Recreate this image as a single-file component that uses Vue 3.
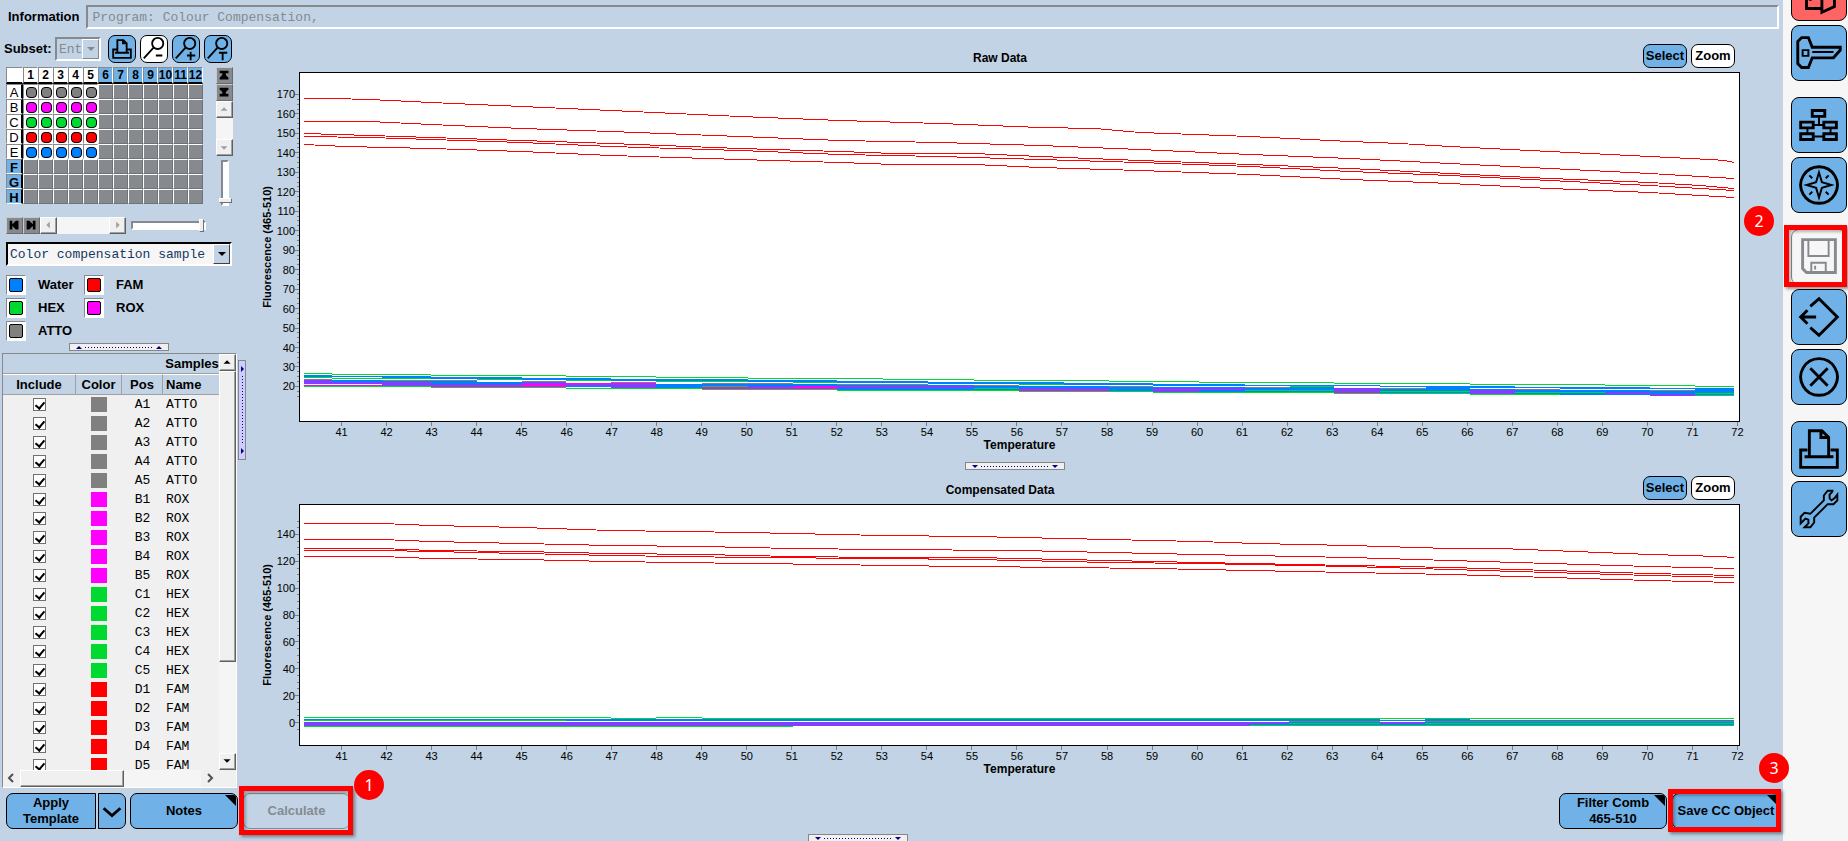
<script setup>
import { ref } from 'vue'

const COLORS = { ATTO: '#808080', ROX: '#ff00ff', HEX: '#00d930', FAM: '#ff0000', Water: '#0080ff' }

const plateRows = [
  ['A', 'ATTO'], ['B', 'ROX'], ['C', 'HEX'], ['D', 'FAM'], ['E', 'Water'], ['F', ''], ['G', ''], ['H', ''],
]
const legend = ['Water', 'FAM', 'HEX', 'ROX', 'ATTO']

const samples = ref(
  plateRows.slice(0, 4).flatMap(([row, dye]) =>
    [1, 2, 3, 4, 5].map((n) => ({ pos: row + n, dye, include: true })),
  ),
)

const G = COLORS.HEX
const B = COLORS.Water
const M = COLORS.ROX
const K = COLORS.ATTO

// Each band run: colour, thickness, then [start, end, y] pieces
const rawBands = [
  [G, 1, [[304, 332, 373], [332, 431, 374], [431, 566, 375], [566, 656, 376], [656, 748, 377], [748, 883, 378], [883, 974, 379], [974, 1109, 380], [1109, 1199, 381], [1199, 1334, 382], [1334, 1470, 383], [1470, 1605, 384], [1605, 1695, 385], [1695, 1734, 386]]],
  [G, 1, [[304, 332, 377], [332, 431, 378], [477, 566, 379], [566, 656, 380], [656, 748, 381], [793, 883, 382], [928, 1019, 383], [1019, 1109, 384], [1153, 1245, 385], [1290, 1334, 386]]],
  [B, 2, [[304, 332, 375], [382, 431, 376], [431, 522, 377], [522, 611, 378], [611, 748, 379], [748, 837, 380], [837, 928, 381], [928, 1064, 382], [1064, 1153, 383], [1153, 1245, 384], [1426, 1515, 386], [1560, 1650, 387], [1695, 1734, 388]]],
  [B, 1, [[332, 382, 376], [1245, 1334, 385], [1334, 1380, 385], [1380, 1426, 386], [1515, 1560, 387], [1650, 1695, 388]]],
  [G, 1, [[304, 431, 386], [431, 566, 387], [566, 702, 388], [702, 837, 389], [837, 1019, 390], [1019, 1153, 391], [1153, 1334, 392], [1334, 1470, 393], [1470, 1650, 394], [1695, 1734, 395]]],
  [B, 4, [[304, 382, 380], [382, 477, 381], [477, 566, 382], [566, 656, 383], [656, 748, 384]]],
  [B, 5, [[748, 837, 384], [837, 928, 385], [928, 1019, 385], [1019, 1153, 386], [1153, 1334, 387]]],
  [B, 5, [[1334, 1470, 388], [1470, 1560, 389], [1560, 1734, 390]]],
  [K, 1, [[304, 332, 379], [382, 477, 380], [522, 566, 381], [611, 656, 382], [702, 793, 383], [837, 928, 384], [974, 1019, 385], [1109, 1153, 386], [1245, 1290, 387], [1380, 1426, 388], [1515, 1560, 389], [1650, 1695, 390]]],
  [M, 1, [[332, 431, 382], [304, 431, 385], [611, 656, 387], [793, 883, 386], [883, 974, 387], [1153, 1245, 389], [1153, 1199, 391], [1334, 1380, 392], [1470, 1515, 390], [1470, 1515, 392], [1605, 1650, 392], [1650, 1695, 395]]],
  [M, 2, [[304, 332, 381], [431, 566, 385], [522, 656, 383], [702, 837, 387], [1019, 1109, 389], [1334, 1380, 389]]],
  [G, 1, [[702, 748, 386], [974, 1019, 388], [1245, 1334, 390], [1380, 1470, 391], [1515, 1605, 392], [1695, 1734, 393]]],
]

const compBands = [
  [G, 1, [[304, 611, 717], [611, 656, 718], [656, 702, 717], [702, 1734, 718], [304, 566, 720]]],
  [B, 1, [[304, 566, 719], [1380, 1425, 720]]],
  [B, 2, [[566, 1289, 719]]],
  [B, 3, [[1289, 1380, 719], [1425, 1470, 719], [1470, 1734, 720]]],
  [B, 4, [[304, 1734, 722]]],
  [K, 1, [[1289, 1380, 721], [1425, 1734, 721]]],
  [M, 1, [[304, 1289, 723], [304, 1289, 725], [1380, 1425, 723]]],
  [G, 1, [[304, 793, 726], [1289, 1380, 723], [1425, 1734, 723], [1250, 1734, 725]]],
]

const rawReds = [
  '304,98 332,98 370,99 431,102 522,106 611,110 740,116 840,120 940,123 1040,127 1095,128 1140,132 1250,136 1350,141 1400,143 1450,146 1550,151 1650,156 1710,159 1725,160 1734,162',
  '304,121 370,121 431,124 522,128 611,131 740,136 840,140 940,142 1040,145 1140,149 1250,154 1350,158 1450,163 1550,168 1650,173 1734,178',
  '304,133 370,135 431,137 522,140 611,143 740,148 840,151 895,153 974,153 1040,156 1140,160 1250,164 1350,168 1450,173 1550,178 1600,180 1650,182 1700,185 1734,188',
  '304,136 370,137 431,139 522,142 611,146 740,150 840,154 940,156 1040,159 1140,162 1250,166 1350,171 1450,175 1550,180 1650,185 1734,190',
  '304,144 345,146 431,148 522,151 611,155 740,159 840,162 895,164 974,164 1040,167 1140,170 1250,174 1350,179 1450,183 1550,188 1650,192 1734,197',
]
const compReds = [
  '304,523 382,523 431,525 522,527 611,530 748,532 837,534 883,535 974,536 1019,537 1109,539 1153,540 1199,541 1256,543 1350,545 1450,548 1500,548 1550,550 1600,552 1650,554 1720,556 1734,557',
  '304,539 382,539 431,541 522,543 611,545 702,546 793,548 883,549 1019,550 1109,552 1199,554 1250,555 1350,557 1450,560 1550,563 1650,566 1734,568',
  '304,548 382,548 431,550 522,551 611,553 702,554 793,556 883,557 974,557 1019,558 1109,560 1199,562 1250,563 1350,565 1450,567 1550,570 1650,573 1734,575',
  '304,550 382,550 431,551 522,553 611,555 748,557 883,558 974,559 1109,562 1199,563 1250,564 1350,566 1450,569 1550,572 1650,575 1734,577',
  '304,556 382,556 431,558 522,559 611,561 748,563 837,564 883,565 974,566 1064,567 1153,568 1250,570 1350,572 1450,574 1550,577 1650,580 1734,582',
]

const X0 = 300
const XW = 1439
const ticks = Array.from({ length: 32 }, (_, i) => ({
  label: 41 + i,
  at: ((341.5 + i * 45.03 - X0) / XW) * 100 + '%',
}))

function yAxis(top, height, zeroY, pxPerUnit, from, to, step, minorFrom, minorTo) {
  const pct = (v) => ((zeroY - v * pxPerUnit - top) / height) * 100 + '%'
  const major = []
  for (let v = from; v <= to; v += step) major.push({ label: v, at: pct(v) })
  const minor = []
  for (let v = minorFrom; v <= minorTo; v += step / 4) minor.push(pct(v))
  return { major, minor }
}

const charts = [
  {
    id: 'raw', title: 'Raw Data', box: [X0, 73, XW, 348], reds: rawReds, bands: rawBands,
    axis: yAxis(73, 348, 425.4, 1.947, 20, 170, 10, 15, 167.5),
  },
  {
    id: 'comp', title: 'Compensated Data', box: [X0, 505, XW, 240], reds: compReds, bands: compBands,
    axis: yAxis(505, 240, 722.5, 1.343, 0, 140, 20, -5, 150),
  },
]

const bandPath = (runs, h) => runs.map(([a, b, y]) => `M${a} ${y}H${b}V${y + h}H${a}Z`).join('')

const printIcon = 'M18 36V9H31L38 16V36M30 9V16H38M13 36H43M16 29H9V47H47V29H40'
const sideGroups = [
  [
    { name: 'Exit', tone: 'red', d: 'M15 20V44H30M31 20V48L44 42V20M19 34V36' },
    { name: 'Log in', d: 'M6 16L10 12H17L21 22H50V25L43 33H21L17 43H10L6 39Z', thin: 'M11 25H17V31H11ZM21 27H43' },
  ],
  [
    { name: 'Navigator', d: 'M21 13H34V19H21ZM9 25H22V31H9ZM33 25H46V31H33ZM9 37H22V43H9ZM33 37H46V43H33Z', thin: 'M28 20V28M22 28H33M22 40H33M16 31V37M40 31V37' },
    { name: 'Overview', d: 'M28 9a19 19 0 1 0 .1 0Z', thin: 'M28 15L31 25L41 28L31 31L28 41L25 31L15 28L25 25ZM18 18L21 21M38 18L35 21M18 38L21 35M38 38L35 35' },
  ],
  [
    { name: 'Save', tone: 'off', marked: true, d: 'M11 10H45V44H15L11 40Z', thin: 'M17 10V27H38V10M20 45V34H35V45M24 37V41' },
    { name: 'Sign off', d: 'M16 21L9 28L16 35M9 28H25M19 17L28 9L47 28L28 47L19 39' },
    { name: 'Close', d: 'M28 9a19 19 0 1 0 .1 0ZM19 19L37 37M37 19L19 37' },
  ],
  [
    { name: 'Print', d: printIcon },
    { name: 'Tools', d: '', thin: 'M42 10L39 13V17L41 19L44 17L47 13V19L43 23L37 23L23 37V42L19 47H13L17 43V39L14 38L9 43V36L13 32L19 33L33 19V14L37 9H43' },
  ],
]

const tools = [
  { name: 'Print subset' },
  { name: 'Zoom out', white: true, mark: 'M16 21H23' },
  { name: 'Zoom in', mark: 'M15 21H24M19 17V26' },
  { name: 'Zoom text', mark: 'M15 18H24M19 18V26' },
]
const subset = ref('Ent')
const view = ref('Color compensation sample')
</script>

<template>
  <div class="app">
    <main class="main">
      <div class="info">
        <label for="info">Information</label>
        <input id="info" class="info-box" value="Program: Colour Compensation," disabled />
      </div>

      <div class="body">
        <aside class="left">
          <div class="subset">
            <label for="subset">Subset:</label>
            <span class="combo off">
              <select id="subset" v-model="subset" disabled><option>Ent</option></select>
            </span>
            <div class="tools">
              <button v-for="(t, i) in tools" :key="t.name" :class="['btn', 'tool', { white: t.white }]" :aria-label="t.name">
                <svg v-if="i === 0" viewBox="0 0 56 56" class="ico small"><path :d="printIcon" /></svg>
                <svg v-else viewBox="0 0 28 28" class="ico lens">
                  <circle cx="18" cy="8" r="6" /><path :d="'M14 12L3 24' + t.mark" />
                </svg>
              </button>
            </div>
          </div>

          <div class="plate-area">
            <table class="plate" aria-label="Plate">
              <thead>
                <tr>
                  <th class="corner"></th>
                  <th v-for="n in 12" :key="n" :class="{ blue: n > 5 }"><span>{{ n }}</span></th>
                </tr>
              </thead>
              <tbody>
                <tr v-for="[row, dye] in plateRows" :key="row">
                  <th :class="{ blue: !dye }"><span>{{ row }}</span></th>
                  <td v-for="n in 12" :key="n" :class="{ used: dye && n < 6 }">
                    <i v-if="dye && n < 6" :style="{ background: COLORS[dye] }"></i>
                  </td>
                </tr>
              </tbody>
            </table>
            <div class="vbar">
              <button class="nav" aria-label="First row"><svg viewBox="0 0 17 17"><path d="M3 3H13V6H10V8L13 11V13H3V11L6 8V6H3Z" /></svg></button>
              <button class="nav" aria-label="Last row"><svg viewBox="0 0 17 17"><path d="M3 13H13V10H10V8L13 5V3H3V5L6 8V10H3Z" /></svg></button>
              <button class="sb dim" aria-label="Up"><svg viewBox="0 0 17 17"><path d="M4 10L8 6L12 10Z" /></svg></button>
              <div class="track"></div>
              <button class="sb dim" aria-label="Down"><svg viewBox="0 0 17 17"><path d="M4 7L8 11L12 7Z" /></svg></button>
              <div class="vslider"><b></b></div>
            </div>
          </div>

          <div class="hbar">
            <button class="nav" aria-label="First column"><svg viewBox="0 0 17 17"><path d="M3 3H6V7L10 3H13V13H10L6 9V13H3Z" /></svg></button>
            <button class="nav" aria-label="Last column"><svg viewBox="0 0 17 17"><path d="M13 3H10V7L6 3H3V13H6L10 9V13H13Z" /></svg></button>
            <button class="sb dim" aria-label="Left"><svg viewBox="0 0 17 17"><path d="M10 4L6 8L10 12Z" /></svg></button>
            <div class="track"></div>
            <button class="sb dim" aria-label="Right"><svg viewBox="0 0 17 17"><path d="M7 4L11 8L7 12Z" /></svg></button>
            <div class="hslider"><b></b></div>
          </div>

          <span class="combo wide">
            <select v-model="view" aria-label="Colour plate by"><option>Color compensation sample</option></select>
          </span>

          <ul class="legend">
            <li v-for="l in legend" :key="l"><span class="swatch"><i :style="{ background: COLORS[l] }"></i></span>{{ l }}</li>
          </ul>

          <button class="grip up" aria-label="Collapse plate"><i></i><u></u><i></i></button>

          <div class="samples">
            <div class="view">
              <table>
                <colgroup><col class="c1" /><col class="c2" /><col class="c3" /><col /></colgroup>
                <thead>
                  <tr class="group"><th colspan="4">Samples</th></tr>
                  <tr class="cols"><th>Include</th><th>Color</th><th>Pos</th><th class="c4">Name</th></tr>
                </thead>
                <tbody>
                  <tr v-for="s in samples" :key="s.pos">
                    <td><input v-model="s.include" type="checkbox" :aria-label="'Include ' + s.pos" /></td>
                    <td><span class="chip" :style="{ background: COLORS[s.dye] }"></span></td>
                    <td>{{ s.pos }}</td>
                    <td class="c4">{{ s.dye }}</td>
                  </tr>
                </tbody>
              </table>
            </div>
            <div class="scroll-y">
              <button class="sb" aria-label="Scroll up"><svg viewBox="0 0 17 17"><path d="M4 10L8 6L12 10Z" /></svg></button>
              <div class="thumb"></div>
              <div class="track"></div>
              <button class="sb" aria-label="Scroll down"><svg viewBox="0 0 17 17"><path d="M4 6L8 10L12 6Z" /></svg></button>
            </div>
            <div class="scroll-x">
              <button class="flat" aria-label="Scroll left"><svg viewBox="0 0 17 17"><path d="M10 4L6 8L10 12" /></svg></button>
              <div class="thumb"></div>
              <div class="track"></div>
              <button class="flat" aria-label="Scroll right"><svg viewBox="0 0 17 17"><path d="M7 4L11 8L7 12" /></svg></button>
              <span></span>
            </div>
          </div>
        </aside>

        <button class="grip upright" aria-label="Collapse samples"><i></i><u></u><i></i></button>

        <section class="charts">
          <template v-for="c in charts" :key="c.id">
            <div class="chart-head">
              <h2>{{ c.title }}</h2>
              <div class="modes"><button class="btn mode">Select</button><button class="btn mode white">Zoom</button></div>
            </div>
            <div :class="['chart', c.id]">
              <div class="y-title"><span>Fluorescence (465-510)</span></div>
              <div class="plot">
                <svg class="curves" :viewBox="c.box.join(' ')" preserveAspectRatio="none">
                  <polyline v-for="p in c.reds" :key="p" :points="p" transform="translate(0 .5)" />
                  <path v-for="([color, h, runs], i) in c.bands" :key="i" :d="bandPath(runs, h)" :fill="color" />
                </svg>
                <svg class="axes">
                  <svg v-for="t in ticks" :key="t.label" :x="t.at" y="100%" class="anchor">
                    <path d="M0 1V5" /><text y="15" text-anchor="middle">{{ t.label }}</text>
                  </svg>
                  <svg v-for="t in c.axis.major" :key="t.label" x="0" :y="t.at" class="anchor">
                    <path d="M-5 0H-1" /><text x="-5" y="4" text-anchor="end">{{ t.label }}</text>
                  </svg>
                  <svg v-for="m in c.axis.minor" :key="m" x="0" :y="m" class="anchor"><path d="M-3 0H-1" /></svg>
                </svg>
              </div>
            </div>
            <div class="x-title">Temperature</div>
            <button v-if="c.id === 'raw'" class="grip down" aria-label="Collapse chart"><i></i><u></u><i></i></button>
          </template>
        </section>
      </div>

      <footer class="foot">
        <button class="btn apply">Apply<br />Template</button>
        <button class="btn drop" aria-label="More templates"><svg viewBox="0 0 28 36"><path d="M5 15L14 23L23 15" /></svg></button>
        <button class="btn notes fold">Notes</button>
        <div class="callout calc">
          <button class="btn off" disabled>Calculate</button>
          <span class="frame"></span><span class="badge">1</span>
        </div>
        <div class="gap"><button class="grip down low" aria-label="Collapse bottom"><i></i><u></u><i></i></button></div>
        <button class="btn filter fold">Filter Comb<br />465-510</button>
        <div class="callout save">
          <button class="btn fold">Save CC Object</button>
          <span class="frame"></span><span class="badge">3</span>
        </div>
      </footer>
    </main>

    <nav class="sidebar">
      <div v-for="(g, i) in sideGroups" :key="i" class="side-group">
        <div v-for="b in g" :key="b.name" :class="['slot', { marked: b.marked }]">
          <button :class="['btn', 'big', b.tone]" :aria-label="b.name">
            <svg viewBox="0 0 56 56" class="ico"><path :d="b.d" /><path :d="b.thin" class="thin" /></svg>
          </button>
          <template v-if="b.marked"><span class="frame"></span><span class="badge">2</span></template>
        </div>
      </div>
    </nav>
  </div>
</template>

<style>
body { background: #c1d3e4; }
</style>

<style scoped>
* { box-sizing: border-box; }
.app {
  display: grid; grid-template-columns: minmax(0, 1fr) 65px; height: 100vh; overflow: hidden;
  background: #c1d3e4; color: #000; font: bold 13px/16px "Liberation Sans", Arial, sans-serif;
}
button, input, select { font: inherit; color: inherit; margin: 0; padding: 0; border: 0; background: none; border-radius: 0; }
svg { display: block; }
.main { display: flex; flex-direction: column; min-width: 0; min-height: 0; }
.info { display: flex; align-items: center; gap: 6px; height: 32px; padding: 2px 4px 0 8px; }
.info-box {
  flex: 1; height: 24px; padding: 0 5px; border: 2px solid; border-color: #868a8e #fff #fff #868a8e;
  font: 13px "Liberation Mono", monospace; color: #868a90;
}
.body { flex: 1; display: flex; min-height: 0; }
.left { width: 238px; display: flex; flex-direction: column; min-height: 0; }

.btn {
  background: #70b2e7; border: 1px solid #000; border-radius: 7px; text-align: center; line-height: 16px;
  position: relative; white-space: nowrap;
}
.btn.white { background: #fff; }
.btn.off { background: #c1d3e4; color: #868a90; border-color: #868a90; }
.btn.red { background: #ff6464; }
.ico { width: 100%; height: 100%; fill: none; stroke: #000; stroke-width: 3; }
.ico .thin { stroke-width: 2; }
.ico.small { stroke-width: 4; }
.ico.lens { stroke-width: 2; }

.subset { display: flex; align-items: center; height: 35px; padding: 0 6px 1px 4px; }
.subset label { width: 51px; }
.subset .tools { display: flex; gap: 4px; margin-left: 7px; }
.tool { width: 28px; height: 28px; }
.combo { position: relative; display: flex; border: 2px solid; }
.combo select { width: 100%; appearance: none; font: 13px "Liberation Mono", monospace; opacity: 1; }
.combo::after {
  content: ""; position: absolute; right: 4px; top: 8px; border: 4px solid transparent; border-top-color: currentColor;
  border-bottom: 0; pointer-events: none;
}
.combo::before {
  content: ""; position: absolute; right: 0; top: 0; bottom: 0; width: 15px; background: #c1d3e4;
  border: 1px solid; border-color: #fff #404040 #404040 #fff; pointer-events: none;
}
.combo.off { width: 46px; height: 24px; border-color: #868a8e #fff #fff #868a8e; color: #868a90; }
.combo.off::before { border-color: #fff #868a8e #868a8e #fff; }
.combo.off select { padding-left: 2px; }
.combo.wide { width: 226px; height: 24px; margin: 8px 0 0 6px; background: #f6f6f6; border-color: #000 #fff #fff #000; }
.combo.wide select { padding-left: 2px; color: #17365f; }

.plate-area { display: flex; gap: 13px; padding-left: 6px; }
.plate { border-collapse: separate; border-spacing: 0; table-layout: fixed; width: 197px; height: 137px; }
.plate th, .plate td { width: 15px; height: 15px; padding: 0; border: 1px solid; }
.plate th { background: #fff; border-color: #868a8e #fff #fff #868a8e; font-size: 12px; line-height: 13px; }
.plate tbody th { font-size: 13px; line-height: 15px; font-weight: normal; }
.plate th.blue { background: #70b2e7; }
.plate tbody th.blue { font-weight: bold; }
.plate th span { display: flex; justify-content: center; height: 13px; }
.plate thead th { border-bottom: 2px solid #000; height: 17px; }
.plate .corner, .plate tbody th { width: 17px; }
.plate tbody th { border-right: 2px solid #000; }
.plate td { background: #868a8e; border-color: #fff #6f7377 #6f7377 #fff; }
.plate td.used { background: #fff; border-color: #868a8e #fff #fff #868a8e; }
.plate td i { display: block; width: 11px; height: 11px; margin: 2px 0 0 2px; border: 1px solid #000; border-radius: 4px; }

.vbar { width: 17px; display: flex; flex-direction: column; align-items: center; }
.nav, .sb, .flat { width: 17px; height: 17px; flex: none; }
.nav { background: #868a8e; border: 1px solid; border-color: #c8c8c8 #6a6a6a #6a6a6a #c8c8c8; }
.nav svg, .sb svg, .flat svg { width: 100%; height: 100%; }
.sb { background: #f0f0f0; border: 1px solid; border-color: #fff #606060 #606060 #fff; box-shadow: inset -1px -1px #a0a0a0; }
.sb.dim { fill: #a0a0a0; }
.flat { background: #f0f0f0; }
.flat svg { fill: none; stroke: #505050; stroke-width: 2; }
.track { flex: 1; align-self: stretch; background: #f5f5f5; }
.vbar .track { flex: none; height: 21px; }
.vslider { width: 8px; height: 46px; margin: 4px 0 -4px; background: #fff; border: 2px solid; border-color: #868a8e #fff #fff #868a8e; position: relative; }
.vslider b { position: absolute; left: -4px; bottom: 1px; width: 13px; height: 5px; background: #eee; border: 1px solid; border-color: #fff #707070 #707070 #fff; }
.hbar { display: flex; align-items: center; width: 200px; margin: 11px 0 0 6px; }
.hslider { width: 75px; height: 9px; margin-left: 5px; background: #fff; border: 2px solid; border-color: #868a8e #fff #fff #868a8e; position: relative; }
.hslider b { position: absolute; right: 0; top: -4px; width: 5px; height: 13px; background: #eee; border: 1px solid; border-color: #fff #707070 #707070 #fff; }
.plate-area { height: 139px; align-items: flex-start; }

.legend { display: grid; grid-template-columns: 78px 1fr; row-gap: 3px; margin: 9px 0 0 6px; padding: 0; list-style: none; }
.legend li { display: flex; align-items: center; gap: 12px; height: 20px; }
.swatch { width: 20px; height: 20px; padding: 2px; background: #fff; border: 1px solid; border-color: #868a8e #fff #fff #868a8e; }
.swatch i { display: block; width: 14px; height: 14px; border: 1px solid #000; border-radius: 2px; }

.grip {
  width: 100px; height: 8px; flex: none; display: flex; align-items: center; justify-content: space-between; padding: 0 6px;
  background: #f0f0f0; border: 1px solid #868686;
}
.grip i { border: 3px solid transparent; }
.grip u { width: 68px; height: 1px; background: repeating-linear-gradient(90deg, #000080 0 1px, transparent 1px 3px); }
.grip.up { margin: 2px 0 0 69px; }
.grip.up i { border-bottom-color: #000080; border-top: 0; }
.grip.down i { border-top-color: #000080; border-bottom: 0; }
.grip.upright { width: 8px; height: 100px; align-self: center; flex-direction: column; padding: 5px 0; background: #ccccff; }
.grip.upright i { border-left-color: #000080; border-right: 0; }
.grip.upright u { width: 1px; height: 68px; background: repeating-linear-gradient(#000080 0 1px, transparent 1px 3px); }

.samples {
  flex: 1; min-height: 0; margin: 2px 1px 0 2px; display: grid; grid-template: minmax(0, 1fr) 17px / minmax(0, 1fr) 17px;
  border: 1px solid; border-color: #868a8e #fff #fff #868a8e; background: #f0f0f0;
}
.view { overflow: hidden; }
.view table { width: 378px; table-layout: fixed; border-collapse: separate; border-spacing: 0; font: 13px/19px "Liberation Mono", monospace; }
.view th { font: bold 13px/18px "Liberation Sans", Arial, sans-serif; background: #c1d3e4; padding: 0; }
.group th { height: 20px; border-bottom: 1px solid #a0a0a0; }
.cols th { height: 21px; border-top: 1px solid #fff; border-right: 1px solid #a0a0a0; border-bottom: 1px solid #a0a0a0; }
.c1 { width: 73px; }
.c2 { width: 46px; }
.c3 { width: 41px; }
.view td { height: 19px; padding: 0; text-align: center; }
.view .c4 { text-align: left; padding-left: 3px; }
.chip { display: block; width: 16px; height: 15px; margin: 2px auto; }
.view input {
  appearance: none; display: block; width: 13px; height: 13px; margin: 3px auto; background: #fff; border: 1px solid #707070; position: relative;
}
.view input:checked::after {
  content: ""; position: absolute; left: 3px; top: 1px; width: 4px; height: 7px; border: solid #000; border-width: 0 2px 2px 0; transform: rotate(40deg);
}
.scroll-y { display: flex; flex-direction: column; }
.thumb { background: #f0f0f0; border: 1px solid; border-color: #fff #606060 #606060 #fff; box-shadow: inset -1px -1px #a0a0a0; }
.scroll-y .thumb { flex: 291; }
.scroll-y .track { flex: 92; }
.scroll-x { grid-column: span 2; display: flex; }
.scroll-x .thumb { flex: 103; }
.scroll-x .track { flex: 78; }
.scroll-x span { width: 18px; }

.charts { flex: 1; min-width: 0; display: flex; flex-direction: column; }
.chart-head { display: grid; height: 34px; padding-top: 6px; align-items: center; }
.chart-head:first-child { height: 40px; padding-top: 12px; }
.chart-head h2 { grid-area: 1 / 1; margin: 0 29px 0 0; font-size: 12px; line-height: 16px; text-align: center; }
.modes { grid-area: 1 / 1; display: flex; justify-content: flex-end; gap: 4px; padding: 0 48px 4px 0; }
.mode { width: 44px; height: 24px; }
.chart { display: flex; min-height: 0; padding-right: 43px; }
.chart.raw { flex: 350 1 0; }
.chart.comp { flex: 242 1 0; }
.y-title { width: 53px; display: flex; align-items: center; padding-left: 14px; font-size: 11px; line-height: 14px; }
.y-title span { writing-mode: vertical-rl; transform: rotate(180deg); white-space: nowrap; }
.plot { flex: 1; min-width: 0; position: relative; background: #fff; border: 1px solid #000; }
.plot > svg { position: absolute; inset: 0; width: 100%; height: 100%; }
.curves { shape-rendering: crispEdges; }
.curves polyline { fill: none; stroke: #f00; stroke-width: 1; vector-effect: non-scaling-stroke; }
.axes, .anchor { overflow: visible; }
.axes text { font: 11px "Liberation Sans", Arial, sans-serif; }
.axes path { stroke: #808080; shape-rendering: crispEdges; }
.x-title { height: 40px; padding: 15px 0 0 10px; font-size: 12px; line-height: 16px; text-align: center; }
.x-title:last-child { height: 42px; }
.charts > .grip { align-self: center; }

.foot { display: flex; align-items: flex-start; height: 53px; padding: 5px 3px 0 6px; }
.foot .btn { height: 36px; }
.foot .apply { width: 90px; border-radius: 7px 0 0 7px; }
.foot .drop { width: 28px; margin-left: 2px; border-radius: 0 7px 7px 0; }
.drop svg { width: 26px; height: 34px; fill: none; stroke: #000; stroke-width: 3; }
.notes { width: 108px; margin-left: 4px; }
.fold { overflow: hidden; }
.fold::after {
  content: ""; position: absolute; top: 1px; right: 1px; border: solid transparent; border-width: 0 11px 11px 0; border-right-color: #000;
}
.callout { position: relative; z-index: 1; }
.callout .btn { width: 100%; }
.calc { width: 107px; margin-left: 5px; }
.gap { flex: 1; position: relative; }
.low { position: absolute; left: 458px; top: 41px; }
.filter { width: 108px; }
.save { width: 108px; margin-left: 5px; }
.frame { position: absolute; border: 5px solid #f00; box-shadow: 2px 2px 3px #0006, inset 2px 2px 3px #0004; pointer-events: none; }
.calc .frame { inset: -7px -3px -6px -4px; }
.save .frame { inset: -4px -1px -3px -4px; }
.badge {
  position: absolute; width: 30px; height: 30px; border-radius: 50%; background: #f00; color: #fff; text-align: center;
  font: 16px/30px "Noto Sans", sans-serif;
}
.calc .badge { left: 111px; top: -23px; }
.save .badge { right: -9px; top: -40px; }

.sidebar { background: #f6f6f6; padding-left: 8px; margin-top: -35px; display: flex; flex-direction: column; gap: 16px; }
.side-group { display: flex; flex-direction: column; gap: 4px; }
.slot { position: relative; width: 56px; height: 56px; }
.big { width: 56px; height: 56px; border-radius: 8px; }
.big .ico { width: 54px; height: 54px; }
.big.off { background: #f6f6f6; }
.big.off .ico { stroke: #868a8e; }
.marked .frame { inset: -4px 0 -2px -7px; }
.marked .badge { left: -47px; top: -23px; }
</style>
